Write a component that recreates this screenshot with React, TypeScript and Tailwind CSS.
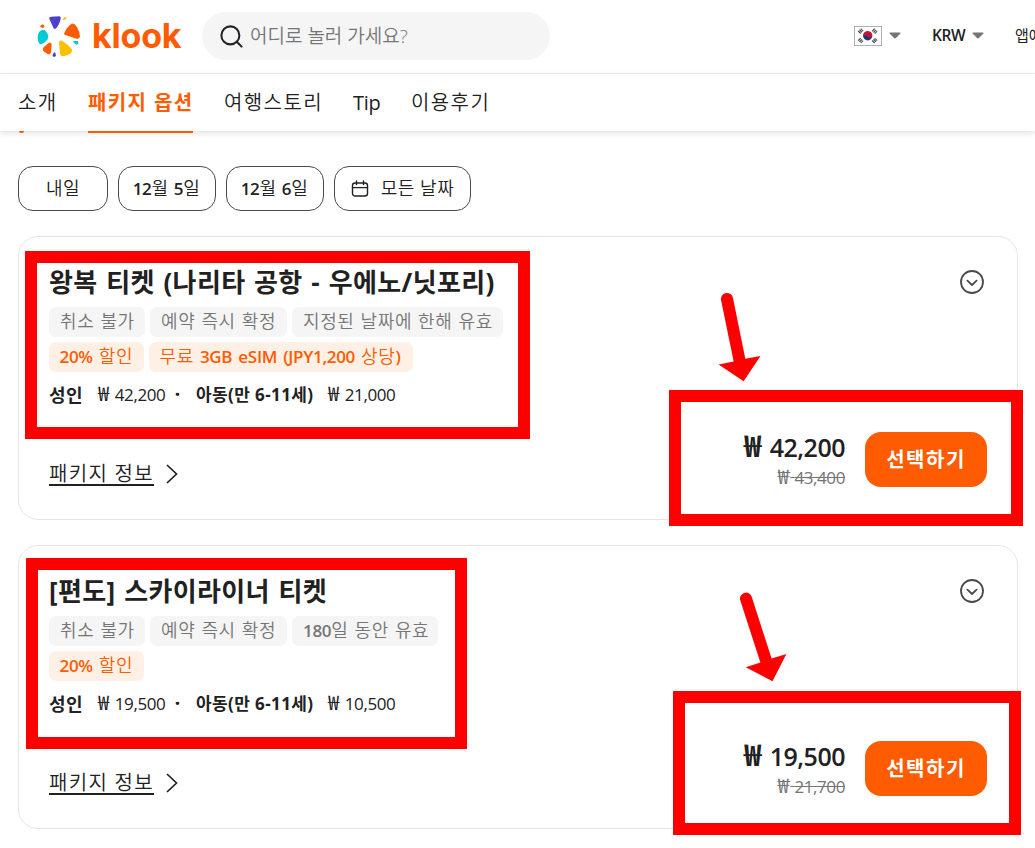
import { Search } from "lucide-react"

const sans = `font-['Open_Sans','Noto_Sans_CJK_KR',sans-serif]`

type Ticket = {
  title: string
  tags: { text: string; className: string }[]
  deals: { text: string; className: string }[]
  adult: string
  child: string
  price: string
  oldPrice: string
}

const tickets: Ticket[] = [
  {
    title: "왕복 티켓 (나리타 공항 - 우에노/닛포리)",
    tags: [
      { text: "취소 불가", className: "w-[96px]" },
      { text: "예약 즉시 확정", className: "w-[137px]" },
      { text: "지정된 날짜에 한해 유효", className: "w-[211px]" },
    ],
    deals: [
      { text: "20% 할인", className: "w-[95px]" },
      { text: "무료 3GB eSIM (JPY1,200 상당)", className: "w-[264px]" },
    ],
    adult: "42,200",
    child: "21,000",
    price: "42,200",
    oldPrice: "43,400",
  },
  {
    title: "[편도] 스카이라이너 티켓",
    tags: [
      { text: "취소 불가", className: "w-[96px]" },
      { text: "예약 즉시 확정", className: "w-[137px]" },
      { text: "180일 동안 유효", className: "w-[146px]" },
    ],
    deals: [{ text: "20% 할인", className: "w-[95px]" }],
    adult: "19,500",
    child: "10,500",
    price: "19,500",
    oldPrice: "21,700",
  },
]

// wraps digits and latin words so they can be heavier than the hangul around them
function Mixed({ text }: { text: string }) {
  return (
    <>
      {text.split(/([0-9A-Za-z(),%]+)/).map((part, i) =>
        i % 2 ? (
          <span key={i} className="font-semibold text-[17px] tracking-[-0.3px]">{part}</span>
        ) : (
          part
        )
      )}
    </>
  )
}

function Won() {
  return <span className="font-['Noto_Sans_CJK_KR',sans-serif] text-[1.18em] leading-none tracking-[0.08em]">₩</span>
}

function Logo() {
  return (
    <div className="flex shrink-0 items-center">
      <svg width="46" height="44" viewBox="108 40 138 132">
        <path d="M148 54Q146 49 154 48L178 47Q184 48 182 55Q177 75 167 84Q163 86 160 81Z" fill="#4f40cc" />
        <path d="M190 53Q193 48 201 50Q200 55 191 59Q188 59 190 53Z" fill="#ffbf00" />
        <path d="M193 97Q201 78 215 69Q223 67 231 79Q240 95 240 108Q238 115 230 114L196 103Q190 101 193 97Z" fill="#ff5b00" />
        <path d="M221 121L233 121Q237 122 234 130Q231 135 226 130L220 124Q219 121 221 121Z" fill="#00cbd1" />
        <path d="M177 126Q177 118 186 120Q204 131 215 145Q219 154 209 160Q198 167 186 167Q181 166 180 158Z" fill="#ffbf00" />
        <path d="M158 162Q162 151 166 156L168 165Q167 169 160 168Q156 167 158 162Z" fill="#4f40cc" />
        <path d="M147 126Q154 124 155 132L153 155Q151 163 143 160Q133 156 129 149Q127 143 132 138Z" fill="#ff5b00" />
        <path d="M117 94Q123 87 132 87Q137 88 144 102Q147 112 139 120Q130 130 122 131Q115 128 113 114Q113 101 117 94Z" fill="#00cbd1" />
        <path d="M122 75Q126 69 132 73Q135 79 130 82Q125 80 120 79Z" fill="#ff5b00" />
      </svg>
      <span className="ml-[10px] w-[91px] font-['Inter',sans-serif] text-[34px] leading-[44px] font-bold tracking-[-0.2px] text-[#ff5b00]">klook</span>
    </div>
  )
}

function KoreanFlag() {
  return (
    <svg width="28" height="20" viewBox="0 0 28 20">
      <rect x="0.5" y="0.5" width="27" height="19" fill="#fff" stroke="#b0b0b0" />
      <circle cx="13.7" cy="9.8" r="4.6" fill="#163a7d" />
      <path d="M9.2 10.8A4.6 4.6 0 1 1 18.2 10.8Q16 12.2 13.7 10.4Q11.5 8.6 9.2 10.8Z" fill="#cd1231" />
      <g stroke="#555" strokeWidth="3.6" strokeDasharray="1.3 0.5">
        <path d="M5 6.7L8.3 3.5" />
        <path d="M19 3.5L22.3 6.7" />
        <path d="M5 13L8.3 16.2" />
        <path d="M19 16.2L22.3 13" />
      </g>
    </svg>
  )
}

function Caret() {
  return (
    <svg width="12" height="7" viewBox="0 0 10 7" preserveAspectRatio="none">
      <path d="M1 0.5H9Q10.2 0.7 9.3 1.8L5.8 6Q5 6.9 4.2 6L0.7 1.8Q-0.2 0.7 1 0.5Z" fill="#757575" />
    </svg>
  )
}

function Header() {
  return (
    <header className="flex h-[74px] items-center border-b border-[#eeeeee] pb-px pl-[36px]">
      <Logo />
      <div className="ml-[19px] flex h-[48px] w-[348px] shrink-0 items-center rounded-full bg-[#f5f5f5] pl-[16px]">
        <Search size={27} strokeWidth={1.8} className="text-[#212121]" />
        <span className="ml-[5px] text-[19px] font-[350] text-[#757575]">어디로 놀러 가세요?</span>
      </div>
      <div className="ml-auto flex items-center pb-px">
        <KoreanFlag />
        <div className="ml-[7px] flex"><Caret /></div>
        <span className="ml-[31px] w-[33px] text-[15.5px] font-semibold tracking-[-0.4px] text-[#212121]">KRW</span>
        <div className="ml-[7px] flex"><Caret /></div>
        <div className="ml-[31px] w-[20px] overflow-hidden text-[15px] font-normal whitespace-nowrap text-[#212121]">앱에서</div>
      </div>
    </header>
  )
}

function Nav() {
  return (
    <nav className="relative flex h-[57px] gap-[31px] pl-[18px] text-[20px] leading-[57px] whitespace-nowrap text-[#212121] shadow-[0_2px_6px_rgba(0,0,0,0.13)]">
      <span className="w-[39px] font-[350] tracking-[1.4px]">소개</span>
      <span className="h-[59px] w-[105px] border-b-2 border-[#ff5b00] font-bold tracking-[1.4px] text-[#ff5b00]">패키지 옵션</span>
      <span className="w-[98px] font-[350] tracking-[1.4px]">여행스토리</span>
      <span className="w-[27px] font-normal tracking-[-0.3px]">Tip</span>
      <span className="font-[350] tracking-[1.4px]">이용후기</span>
      <i className="absolute top-[57px] left-[19px] h-[2px] w-[5px] rounded-b-full bg-[#ff5b00]" />
    </nav>
  )
}

function DateFilters() {
  const chip = "flex h-[45px] items-center justify-center rounded-[15px] border border-[#4a4a4a]"
  return (
    <div className="flex gap-[10px] pt-[35px] pl-[18px] text-[18px] font-[350] tracking-[0.5px] text-[#212121]">
      <div className={`${chip} w-[90px]`}>내일</div>
      <div className={`${chip} w-[98px]`}><span className="mr-px"><Mixed text="12월 5일" /></span></div>
      <div className={`${chip} w-[98px]`}><span className="mr-px"><Mixed text="12월 6일" /></span></div>
      <div className={`${chip} w-[137px] gap-[12px]`}>
        <svg width="18" height="18" viewBox="0 0 18 18" fill="none" stroke="#212121" strokeWidth="1.4" strokeLinecap="round">
          <rect x="1.5" y="3" width="15" height="13" rx="2.5" />
          <path d="M1.5 7.6H16.5M5.5 1V4.6M12.5 1V4.6" />
        </svg>
        <span>모든 날짜</span>
      </div>
    </div>
  )
}

function TicketCard({ ticket }: { ticket: Ticket }) {
  const tag = "flex h-[30px] items-center rounded-[7px] pb-px text-[18px] font-[350] tracking-[0.6px] [word-spacing:0.8px]"
  return (
    <section className="flex h-[284px] w-[1000px] justify-between rounded-[20px] border border-[#e6e6e6] px-[30px] text-[#212121]">
      <div className="pt-[27px] whitespace-nowrap">
        <h2 className="text-[26px] leading-[36px] font-bold tracking-[0.37px] [word-spacing:1.5px]">{ticket.title}</h2>
        <div className="mt-[7px] flex gap-[5px]">
          {ticket.tags.map((t) => (
            <div key={t.text} className={`${tag} ${t.className} bg-[#f5f5f5] pl-[11px] text-[#757575]`}>
              <span><Mixed text={t.text} /></span>
            </div>
          ))}
        </div>
        <div className="mt-[5px] flex gap-[5px]">
          {ticket.deals.map((t) => (
            <div key={t.text} className={`${tag} ${t.className} bg-[#fff0e5] pl-[10.5px] text-[#ff5b00]`}>
              <span><Mixed text={t.text} /></span>
            </div>
          ))}
        </div>
        <div className="mt-[10px] flex text-[17px] leading-[26px]">
          <span className="w-[49px] text-[18px] font-bold tracking-[0.5px]">성인</span>
          <span className="w-[77px] text-[17px] tracking-[-0.4px]"><Won /> {ticket.adult}</span>
          <span className="w-[21px] font-extrabold">·</span>
          <span className="w-[132px] font-bold tracking-[0.4px]">아동(만 6-11세)</span>
          <span className="text-[17px] tracking-[-0.4px]"><Won /> {ticket.child}</span>
        </div>
        <div className="mt-[54px] flex items-center">
          <span className="h-[24px] border-b-2 border-[#212121] text-[20px] leading-[24px] font-[350] tracking-[1.3px]">패키지 정보</span>
          <svg className="ml-[11px]" width="14" height="20" viewBox="0 0 14 20" fill="none" stroke="#212121" strokeWidth="1.7">
            <path d="M2 1L11.5 10L2 19" />
          </svg>
        </div>
      </div>
      <div className="flex flex-col items-end pt-[33px]">
        <svg className="mr-[3px]" width="24" height="24" viewBox="0 0 24 24" fill="none" stroke="#4a4a4a" strokeWidth="1.8" strokeLinecap="round" strokeLinejoin="round">
          <circle cx="12" cy="12" r="11" />
          <path d="M7.4 10.6L12 15L16.6 10.6" />
        </svg>
        <div className="mt-[138px] flex">
          <div className="mr-[20px] -mt-[2px] text-right">
            <div className="text-[25px] leading-[34px] font-semibold tracking-[-0.5px]"><Won /> {ticket.price}</div>
            <div className="mt-[2px] text-[17px] leading-[22px] tracking-[-0.4px] text-[#757575] line-through"><Won /> {ticket.oldPrice}</div>
          </div>
          <button className="h-[55px] w-[122px] rounded-[16px] bg-[#ff5b00] pt-px text-[20px] font-bold tracking-[1.5px] text-white">선택하기</button>
        </div>
      </div>
    </section>
  )
}

// red boxes and arrows drawn over the page
function Highlights() {
  return (
    <>
      <div className="absolute top-[251px] left-[25px] h-[188px] w-[505px] border-12 border-[#ff0000]" />
      <div className="absolute top-[390px] left-[669px] h-[136px] w-[354px] border-12 border-[#ff0000]" />
      <div className="absolute top-[558px] left-[26px] h-[191px] w-[441px] border-12 border-[#ff0000]" />
      <div className="absolute top-[691px] left-[673px] h-[144px] w-[348px] border-12 border-[#ff0000]" />
      <svg className="absolute top-[290px] left-[716px]" width="48" height="94" viewBox="716 290 48 94" fill="#ff0000">
        <path d="M721 300A6 6 0 0 1 733 298L745.3 358.8L760.5 356L743.6 381.2L718.6 364.4L733.7 361.6Z" />
      </svg>
      <svg className="absolute top-[590px] left-[738px]" width="52" height="94" viewBox="738 590 52 94" fill="#ff0000">
        <path d="M740.3 600.5A6 6 0 0 1 751.7 596.7L771.6 658.6L786.4 654L772.5 681.2L745.7 667.2L760.4 662.5Z" />
      </svg>
    </>
  )
}

function App() {
  return (
    <div className={`relative h-[848px] w-[1035px] overflow-hidden bg-white ${sans}`}>
      <Header />
      <Nav />
      <DateFilters />
      <main className="flex flex-col gap-[25px] pt-[25px] pl-[18px]">
        {tickets.map((ticket) => (
          <TicketCard key={ticket.title} ticket={ticket} />
        ))}
      </main>
      <Highlights />
    </div>
  )
}

export default App
